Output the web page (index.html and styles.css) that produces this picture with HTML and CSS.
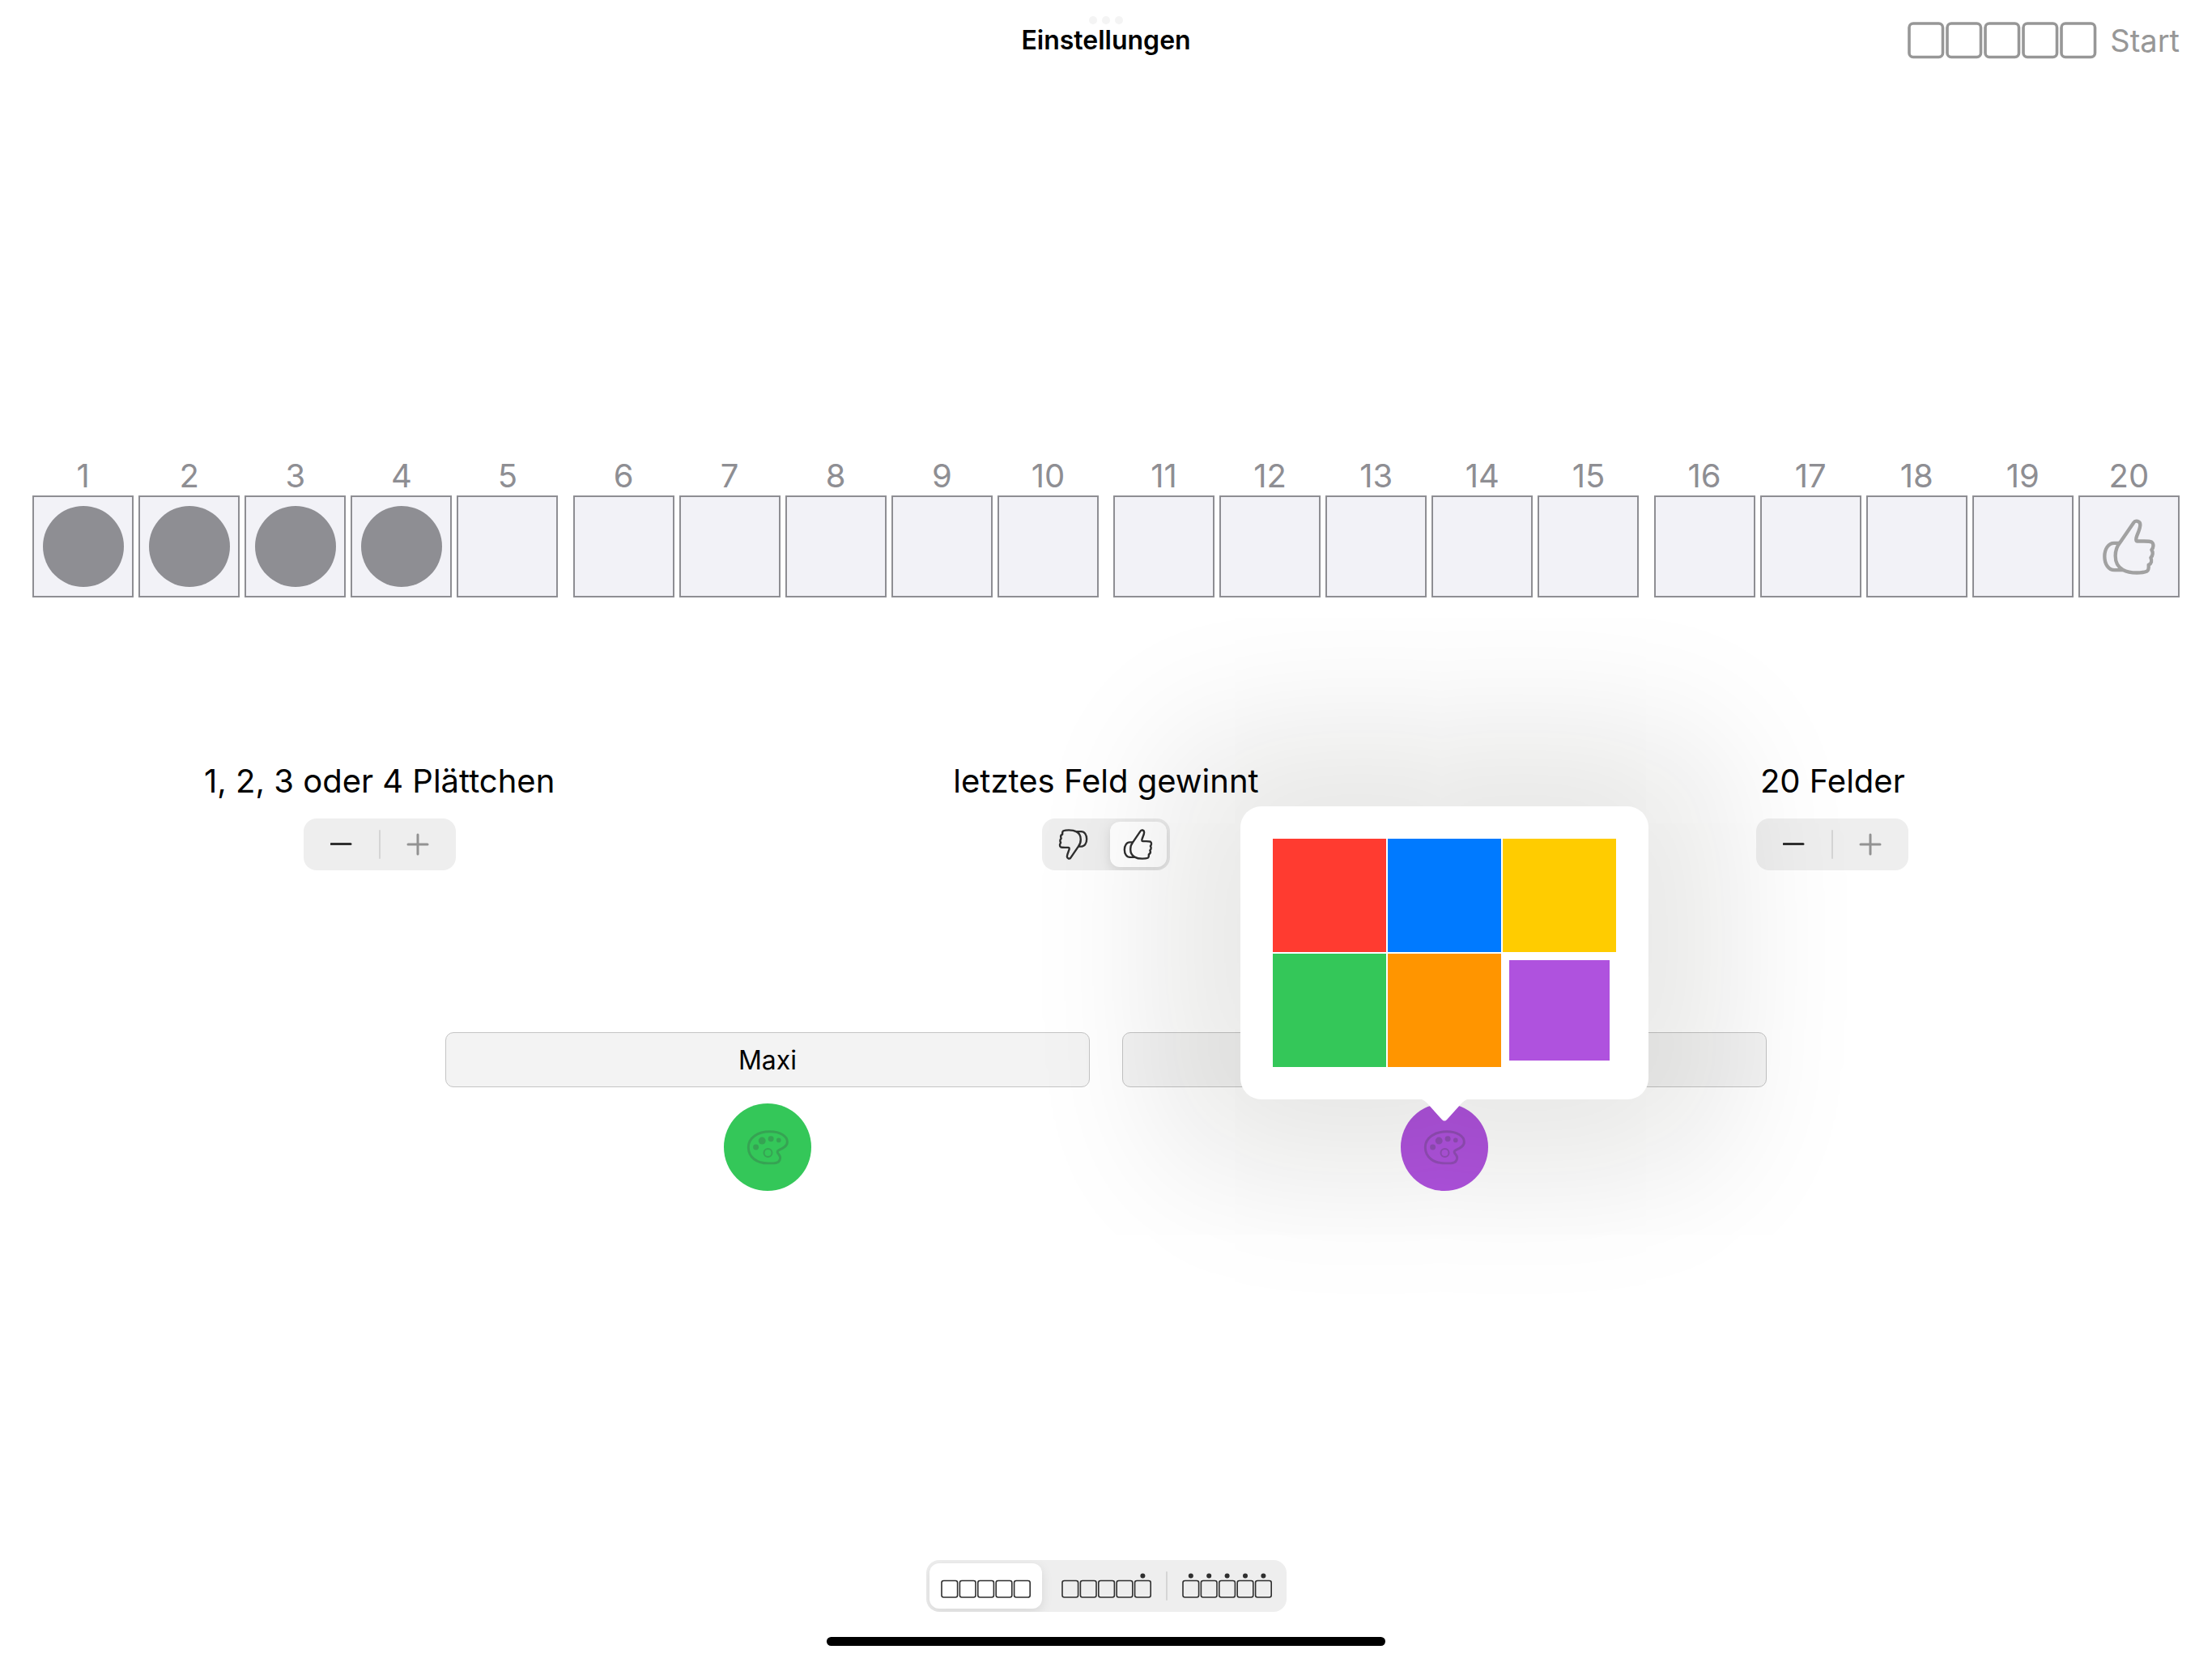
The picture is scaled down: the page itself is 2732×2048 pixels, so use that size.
FILE: index.html
```html
<!DOCTYPE html>
<html lang="de">
<head>
<meta charset="utf-8">
<meta name="viewport" content="width=device-width, initial-scale=1">
<title>Einstellungen</title>
<link rel="stylesheet" href="styles.css">
</head>
<body>
<svg class="symbols" aria-hidden="true">
  <symbol id="thumb" viewBox="290 272 201 212">
    <g fill="none" stroke="currentColor" stroke-width="13" stroke-linejoin="round">
      <path d="M408 288L357 362C345 377 340 392 340 411C340 437 351 454 368 463C382 471 398 474 420 474C438 474 449 472 456 469C464 465 464 456 463 445C474 440 476 429 471 418C480 410 480 397 474 389C482 381 483 366 474 360C468 357 457 357 446 357H422C415 357 416 347 419 339C424 325 432 310 432 296C432 282 414 278 408 288Z"/>
      <path d="M356 364H335C314 364 300 386 300 413C300 441 314 464 337 464H370"/>
    </g>
  </symbol>
  <symbol id="palette" viewBox="183 164 160 132">
    <path fill="none" stroke="currentColor" stroke-width="9" d="M263 290C222 290 190 268 190 231C190 194 226 172 270 172C309 172 335 189 335 210C335 227 318 234 305 240C295 245 297 250 304 258C313 269 309 290 285 290Z"/>
    <circle cx="263" cy="251" r="15" fill="none" stroke="currentColor" stroke-width="6"/>
    <g fill="currentColor"><circle cx="241" cy="206" r="13.500"/><circle cx="274" cy="199" r="10.500"/><circle cx="303" cy="204" r="8.500"/><circle cx="218" cy="230" r="10.500"/></g>
  </symbol>
  <symbol id="row" viewBox="0 0 112 44">
    <g fill="none" stroke="currentColor" stroke-width="1.600">
      <rect x="1" y="15.500" width="19.600" height="20.500" rx="2.500"/><rect x="23.400" y="15.500" width="19.600" height="20.500" rx="2.500"/><rect x="45.800" y="15.500" width="19.600" height="20.500" rx="2.500"/><rect x="68.200" y="15.500" width="19.600" height="20.500" rx="2.500"/><rect x="90.600" y="15.500" width="19.600" height="20.500" rx="2.500"/>
    </g>
  </symbol>
</svg>

<header class="topbar">
  <span class="multitask" aria-hidden="true"><i></i><i></i><i></i></span>
  <h1 class="title">Einstellungen</h1>
  <button class="start" type="button">
    <svg class="start-icon" viewBox="0 0 234 46" aria-hidden="true">
      <g fill="none" stroke="currentColor" stroke-width="3.600"><rect x="2" y="2" width="41.500" height="41.500" rx="5"/><rect x="49" y="2" width="41.500" height="41.500" rx="5"/><rect x="96" y="2" width="41.500" height="41.500" rx="5"/><rect x="143" y="2" width="41.500" height="41.500" rx="5"/><rect x="190" y="2" width="41.500" height="41.500" rx="5"/></g>
    </svg>
    Start
  </button>
</header>

<main class="content">
  <section class="board" aria-label="Spielfeld">
    <div class="group">
      <div class="field">1<div class="cell"><span class="disc"></span></div></div>
      <div class="field">2<div class="cell"><span class="disc"></span></div></div>
      <div class="field">3<div class="cell"><span class="disc"></span></div></div>
      <div class="field">4<div class="cell"><span class="disc"></span></div></div>
      <div class="field">5<div class="cell"></div></div>
    </div>
    <div class="group">
      <div class="field">6<div class="cell"></div></div>
      <div class="field">7<div class="cell"></div></div>
      <div class="field">8<div class="cell"></div></div>
      <div class="field">9<div class="cell"></div></div>
      <div class="field">10<div class="cell"></div></div>
    </div>
    <div class="group">
      <div class="field">11<div class="cell"></div></div>
      <div class="field">12<div class="cell"></div></div>
      <div class="field">13<div class="cell"></div></div>
      <div class="field">14<div class="cell"></div></div>
      <div class="field">15<div class="cell"></div></div>
    </div>
    <div class="group">
      <div class="field">16<div class="cell"></div></div>
      <div class="field">17<div class="cell"></div></div>
      <div class="field">18<div class="cell"></div></div>
      <div class="field">19<div class="cell"></div></div>
      <div class="field">20<div class="cell"><svg class="goal" aria-hidden="true"><use href="#thumb"/></svg></div></div>
    </div>
  </section>

  <section class="options">
    <div class="option">
      <span class="option-label">1, 2, 3 oder 4 Plättchen</span>
      <div class="stepper">
        <button class="step" type="button" aria-label="Weniger Plättchen"><svg viewBox="0 0 28 28"><path d="M1 13.500H25"/></svg></button>
        <button class="step" type="button" aria-label="Mehr Plättchen" disabled><svg viewBox="0 0 28 28"><path d="M2 14H26M14 2V26"/></svg></button>
      </div>
    </div>
    <div class="option">
      <span class="option-label">letztes Feld gewinnt</span>
      <div class="segmented" role="radiogroup" aria-label="Letztes Feld">
        <label class="segment segment-thumb"><input type="radio" name="last" aria-label="verliert"><svg class="thumb thumb-down"><use href="#thumb"/></svg></label>
        <label class="segment segment-thumb"><input type="radio" name="last" aria-label="gewinnt" checked><svg class="thumb"><use href="#thumb"/></svg></label>
      </div>
    </div>
    <div class="option">
      <span class="option-label">20 Felder</span>
      <div class="stepper">
        <button class="step" type="button" aria-label="Weniger Felder"><svg viewBox="0 0 28 28"><path d="M1 13.500H25"/></svg></button>
        <button class="step" type="button" aria-label="Mehr Felder" disabled><svg viewBox="0 0 28 28"><path d="M2 14H26M14 2V26"/></svg></button>
      </div>
    </div>
  </section>

  <section class="players">
    <div class="player">
      <input class="name" type="text" value="Maxi" aria-label="Name Spieler 1">
      <div class="picker">
        <button class="color green" type="button" aria-label="Farbe Spieler 1"><svg class="palette"><use href="#palette"/></svg></button>
      </div>
    </div>
    <div class="player">
      <input class="name" type="text" aria-label="Name Spieler 2">
      <div class="picker">
        <button class="color purple" type="button" aria-label="Farbe Spieler 2"><svg class="palette"><use href="#palette"/></svg></button>
        <div class="popover" role="dialog" aria-label="Farbe">
          <button class="swatch red" type="button" aria-label="Rot"></button>
          <button class="swatch blue" type="button" aria-label="Blau"></button>
          <button class="swatch yellow" type="button" aria-label="Gelb"></button>
          <button class="swatch green" type="button" aria-label="Grün"></button>
          <button class="swatch orange" type="button" aria-label="Orange"></button>
          <button class="swatch purple selected" type="button" aria-label="Violett"></button>
          <svg class="arrow" viewBox="0 0 56 27" aria-hidden="true"><path d="M0 0H56C53 1 51 3 49 5L31 25Q28 28 25 25L7 5C5 3 3 1 0 0Z"/></svg>
        </div>
      </div>
    </div>
  </section>
</main>

<footer class="footer">
  <div class="segmented" role="radiogroup" aria-label="Nummerierung">
    <label class="segment segment-row"><input type="radio" name="numbers" aria-label="Keine Nummern" checked><svg class="row" viewBox="-1 0 112 44"><use href="#row" width="112" height="44"/></svg></label>
    <label class="segment segment-row"><input type="radio" name="numbers" aria-label="Jede fünfte Nummer"><svg class="row" viewBox="-1 0 112 44"><use href="#row" width="112" height="44"/><circle cx="100.400" cy="9.500" r="3"/></svg></label>
    <label class="segment segment-row divided"><input type="radio" name="numbers" aria-label="Alle Nummern"><svg class="row" viewBox="-1 0 112 44"><use href="#row" width="112" height="44"/><circle cx="10.800" cy="9.500" r="3"/><circle cx="33.200" cy="9.500" r="3"/><circle cx="55.600" cy="9.500" r="3"/><circle cx="78" cy="9.500" r="3"/><circle cx="100.400" cy="9.500" r="3"/></svg></label>
  </div>
  <div class="home-indicator"></div>
</footer>
</body>
</html>
```

FILE: styles.css
```css
* {
  box-sizing: border-box;
}

body {
  margin: 0;
  min-height: 100vh;
  display: flex;
  flex-direction: column;
  background: #fff;
  color: #000;
  font-family: Inter, "Liberation Sans", sans-serif;
  font-size: 40px;
}

button,
input {
  font: inherit;
  color: inherit;
  margin: 0;
  padding: 0;
  border: 0;
}

svg {
  display: block;
}

.symbols {
  position: absolute;
  width: 0;
  height: 0;
}

/* Top bar */
.topbar {
  position: relative;
  display: grid;
  grid-template-columns: 1fr auto 1fr;
  align-items: center;
  height: 100px;
  padding: 0 40px;
}

.multitask {
  position: absolute;
  top: 20px;
  left: 50%;
  transform: translateX(-50%);
  display: flex;
  gap: 6px;
}

.multitask i {
  width: 10px;
  height: 10px;
  border-radius: 50%;
  background: #f4f4f4;
}

.title {
  grid-column: 2;
  margin: 0;
  font-size: 32px;
  line-height: 40px;
  font-weight: 600;
}

.start {
  justify-self: end;
  display: flex;
  align-items: center;
  gap: 16px;
  background: none;
  color: #979797;
  font-size: 38px;
  line-height: 48px;
}

.start-icon {
  width: 234px;
  height: 46px;
}

/* Board */
.content {
  padding: 464px 40px 0;
}

.board {
  display: flex;
  gap: 18px;
}

.group {
  flex: 1;
  display: flex;
  gap: 6px;
}

.field {
  flex: 1;
  color: #8e8e93;
  font-size: 40px;
  line-height: 48px;
  text-align: center;
}

.cell {
  display: flex;
  align-items: center;
  justify-content: center;
  aspect-ratio: 125 / 126;
  border: 2px solid #8e8e93;
  background: #f2f2f7;
}

.disc {
  width: 100px;
  height: 100px;
  border-radius: 50%;
  background: #8e8e93;
}

.goal {
  width: 67px;
  height: 71px;
  color: #a1a1a1;
}

/* Options */
.options {
  display: grid;
  grid-template-columns: repeat(3, 1fr);
  gap: 40px;
  margin-top: 200px;
}

.option {
  display: flex;
  flex-direction: column;
  align-items: center;
  gap: 19px;
}

.option-label {
  line-height: 54px;
  white-space: nowrap;
}

.stepper {
  display: flex;
  width: 188px;
  height: 64px;
  border-radius: 16px;
  background: #eee;
}

.step {
  position: relative;
  flex: 1;
  display: flex;
  align-items: center;
  justify-content: center;
  background: none;
  color: #2f2f2f;
}

.step:disabled {
  color: #929292;
}

.step svg {
  width: 28px;
  height: 28px;
  fill: none;
  stroke: currentColor;
  stroke-width: 3;
  stroke-linecap: round;
}

.step + .step::before,
.divided::before {
  content: "";
  position: absolute;
  left: -1px;
  top: 14px;
  width: 2px;
  height: 36px;
  border-radius: 1px;
  background: #d5d5d5;
}

.segmented {
  display: flex;
  gap: 10px;
  padding: 4px;
  border-radius: 16px;
  background: #eee;
}

.segment {
  position: relative;
  display: flex;
  align-items: center;
  justify-content: center;
  height: 56px;
  border-radius: 12px;
  color: #2f2f2f;
}

.segment input {
  position: absolute;
  inset: 0;
  appearance: none;
}

.segment:has(:checked) {
  background: #fff;
  box-shadow: 0 4px 14px rgba(0, 0, 0, 0.1);
}

.segmented {
  overflow: hidden;
}

.segment-thumb {
  width: 70px;
}

.segment-row {
  width: 139px;
}

.divided::before {
  left: -6px;
  top: 10px;
}

.thumb {
  width: 37px;
  height: 40px;
}

.thumb-down {
  transform: rotate(180deg);
}

.row {
  width: 112px;
  height: 44px;
  fill: currentColor;
}

/* Players */
.players {
  display: grid;
  grid-template-columns: 1fr 1fr;
  gap: 40px;
  max-width: 1632px;
  margin: 200px auto 0;
}

.player {
  display: flex;
  flex-direction: column;
  align-items: center;
  gap: 20px;
}

.name {
  width: 100%;
  height: 68px;
  border: 1px solid #c4c4c4;
  border-radius: 10px;
  background: #f3f3f3;
  font-size: 32px;
  text-align: center;
}

.picker {
  position: relative;
}

.color {
  display: flex;
  align-items: center;
  justify-content: center;
  width: 108px;
  height: 108px;
  border-radius: 50%;
}

.palette {
  width: 53px;
  height: 44px;
  color: #3c3c43;
  opacity: 0.25;
}

.popover {
  position: absolute;
  z-index: 1;
  left: 50%;
  bottom: calc(100% + 5px);
  transform: translateX(-50%);
  display: grid;
  grid-template-columns: repeat(3, 140px);
  gap: 2px;
  padding: 40px;
  border-radius: 26px;
  background: #fff;
  box-shadow: 0 0 180px 90px rgba(20, 20, 5, 0.105);
}

.swatch {
  height: 140px;
}

.selected {
  border: 8px solid #fff;
}

.arrow {
  position: absolute;
  top: 100%;
  left: 50%;
  width: 56px;
  height: 27px;
  transform: translateX(-50%);
  fill: #fff;
}

.red { background: #ff3b30; }
.blue { background: #007aff; }
.yellow { background: #fc0; }
.green { background: #34c759; }
.orange { background: #ff9500; }
.purple { background: #af52de; }

/* Footer */
.footer {
  display: flex;
  flex-direction: column;
  align-items: center;
  gap: 31px;
  margin-top: auto;
  padding-bottom: 15px;
}

.home-indicator {
  width: 690px;
  height: 11px;
  border-radius: 6px;
  background: #000;
}
```
